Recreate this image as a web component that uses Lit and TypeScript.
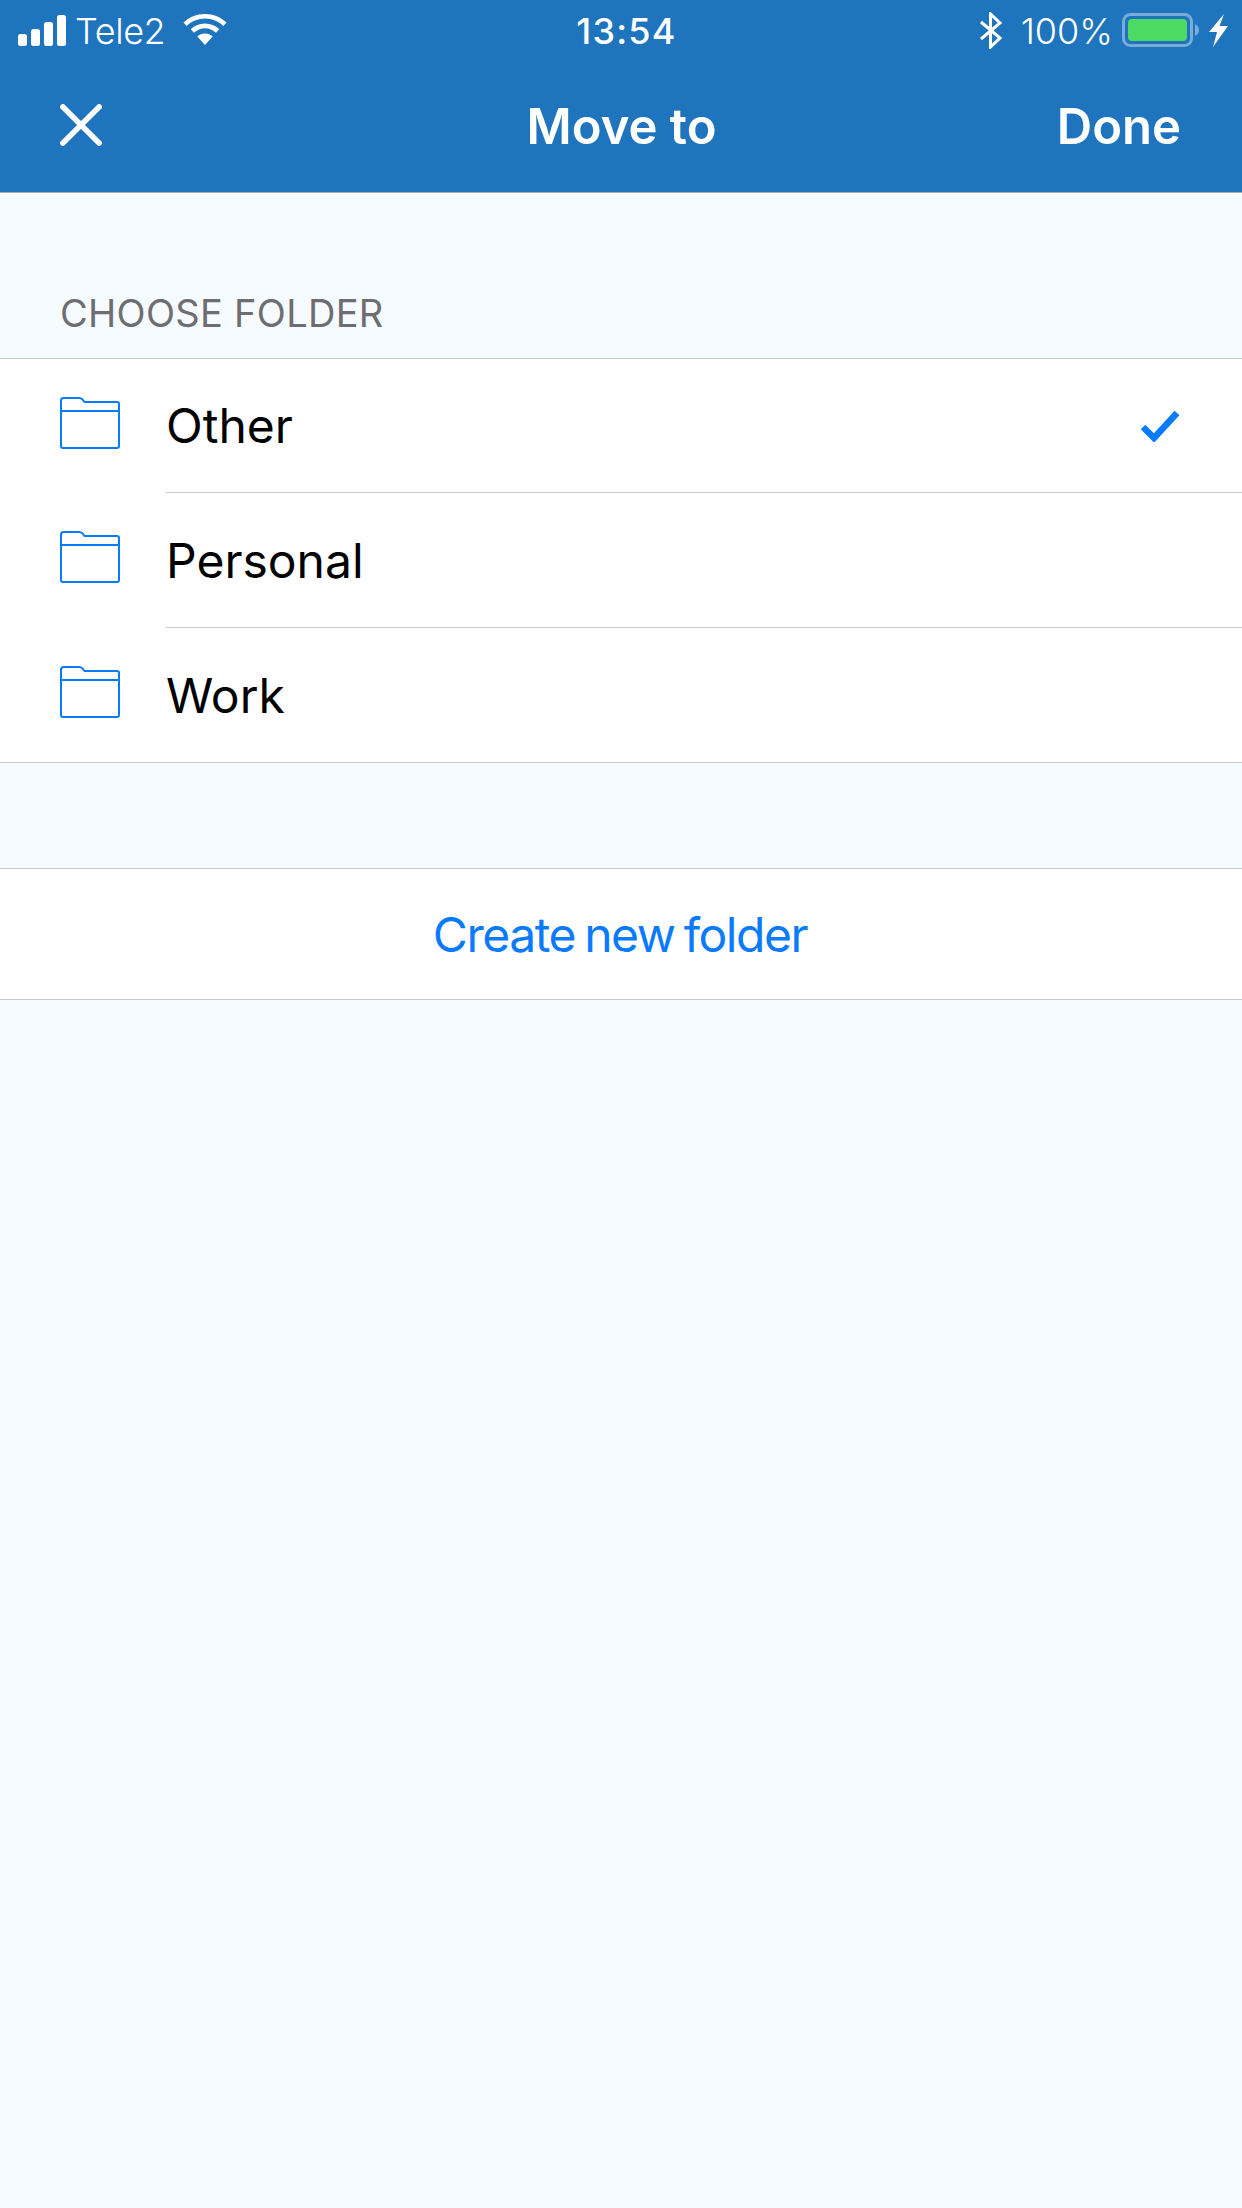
import { LitElement, html, css } from "lit";
import { customElement } from "lit/decorators.js";

const folder = html`<svg class="folder" width="60" height="52" viewBox="0 0 60 52" fill="none" stroke="#0a7aff" stroke-width="2"><path d="M1 3.500 Q1 1 3.500 1 H19 Q21 1 22.500 2.500 L24.500 5 H57 Q59 5 59 7 V49 Q59 51 57 51 H3 Q1 51 1 49 Z"/><path d="M1 14 H59"/></svg>`;

@customElement("app-root")
export class AppRoot extends LitElement {
  static styles = css`
    :host { display: block; width: 1242px; height: 2208px; background: #f6fbff; font-family: Inter, "Noto Sans", sans-serif; overflow: hidden; }
    .top { background: #1e74bd; color: #fff; height: 192px; border-bottom: 1px solid #a9a9a9; }
    .status { height: 60px; display: grid; grid-template-columns: 1fr auto 1fr; align-items: center; padding: 0 13px 0 18px; font-size: 36px; font-weight: 300; }
    .sl { display: flex; align-items: center; }
    .sig { margin-right: 8px; }
    .tele { letter-spacing: -0.400px; position: relative; top: 1px; }
    .wifi { margin-left: 18px; }
    .time { font-weight: 500; font-size: 36px; letter-spacing: 1.2px; position: relative; left: 3px; top: 1px; }
    .sr { display: flex; align-items: center; justify-content: flex-end; }
    .pct { margin: 0 9px 0 19px; position: relative; top: 1px; }
    .bolt { margin-left: 9px; }
    .nav { height: 132px; display: grid; grid-template-columns: 1fr auto 1fr; align-items: center; padding: 0 61px 0 60px; font-size: 49px; font-weight: 600; }
    .x { display: block; margin-top: -3px; }
    .title { position: relative; left: 1px; }
    .done { text-align: right; }
    .section { font-size: 38px; color: #6d6d72; height: 165px; box-sizing: border-box; padding: 0 0 25px 60px; display: flex; align-items: flex-end; letter-spacing: 0.3px; line-height: 40px; }
    .list { background: #fff; border-top: 1px solid #c8c8cc; border-bottom: 1px solid #c8c8cc; }
    .row { height: 135px; display: flex; align-items: center; padding-left: 60px; }
    .row.first { height: 133px; }
    .row + .row .body { border-top: 1px solid #c8c8cc; }
    .folder { flex: none; margin-right: 46px; margin-top: -5px; }
    .body { flex: 1; align-self: stretch; display: flex; align-items: center; justify-content: space-between; padding-right: 63px; font-size: 48px; color: #000; }
    .create { margin-top: 105px; height: 130px; padding-right: 2px; display: flex; align-items: center; justify-content: center; color: #0a7aff; font-size: 48px; letter-spacing: -1.450px; word-spacing: -3px; }
  `;
  render() {
    return html`
      <div class="top">
        <div class="status">
          <div class="sl">
            <svg class="sig" width="49" height="31" viewBox="0 0 49 31" fill="#fff"><rect x="0" y="19" width="9" height="12" rx="2.500"/><rect x="13" y="14" width="9" height="17" rx="2.500"/><rect x="26" y="7" width="9" height="24" rx="2.500"/><rect x="39" y="0" width="9" height="31" rx="2.500"/></svg>
            <span class="tele">Tele2</span>
            <svg class="wifi" width="44" height="32" viewBox="0 0 44 32" fill="#fff"><path d="M22 0 C13.500 0 6 3.300 0.500 8.500 L3.700 12 C8.500 7.500 15 4.600 22 4.600 C29 4.600 35.500 7.500 40.300 12 L43.500 8.500 C38 3.300 30.500 0 22 0 Z"/><path d="M22 9.500 C16.500 9.500 11.500 11.700 7.700 15.200 L11 18.700 C14 16 17.800 14.200 22 14.200 C26.200 14.200 30 16 33 18.700 L36.300 15.200 C32.500 11.700 27.500 9.500 22 9.500 Z"/><path d="M22 19.500 C19 19.500 16.300 20.700 14.300 22.500 L22 31 L29.700 22.500 C27.700 20.700 25 19.500 22 19.500 Z"/></svg>
          </div>
          <div class="time">13:54</div>
          <div class="sr">
            <svg width="22" height="37" viewBox="0 0 22 37" fill="none" stroke="#fff" stroke-width="3"><path d="M1 10 L20 26 L10.500 35 V2 L20 11 L1 27"/></svg>
            <span class="pct">100%</span>
            <svg width="78" height="34" viewBox="0 0 78 34"><rect x="1.500" y="1.500" width="68" height="31" rx="7" fill="none" stroke="#fff" stroke-opacity="0.4" stroke-width="3"/><rect x="6" y="6" width="59" height="22" rx="4" fill="#4cd964"/><path d="M73 11 Q77 13 77 17 Q77 21 73 23 Z" fill="#fff" fill-opacity="0.4"/></svg>
            <svg class="bolt" width="20" height="33" viewBox="0 0 20 33" fill="#fff"><path d="M15 0 L0 18 H8 L4 33 L19 12 H10.500 Z"/></svg>
          </div>
        </div>
        <div class="nav">
          <svg class="x" width="42" height="42" viewBox="0 0 42 42" stroke="#fff" stroke-width="5.500" fill="none"><path d="M1 1 L41 41 M41 1 L1 41"/></svg>
          <div class="title">Move to</div>
          <div class="done">Done</div>
        </div>
      </div>
      <div class="section">CHOOSE FOLDER</div>
      <div class="list">
        <div class="row first">${folder}<div class="body"><span>Other</span>
          <svg width="38" height="32" viewBox="0 0 38 32" fill="none" stroke="#0a7aff" stroke-width="6.500"><path d="M2 17 L13 28 L36 3"/></svg></div></div>
        <div class="row">${folder}<div class="body"><span>Personal</span></div></div>
        <div class="row">${folder}<div class="body"><span>Work</span></div></div>
      </div>
      <div class="list create">Create new folder</div>
    `;
  }
}
